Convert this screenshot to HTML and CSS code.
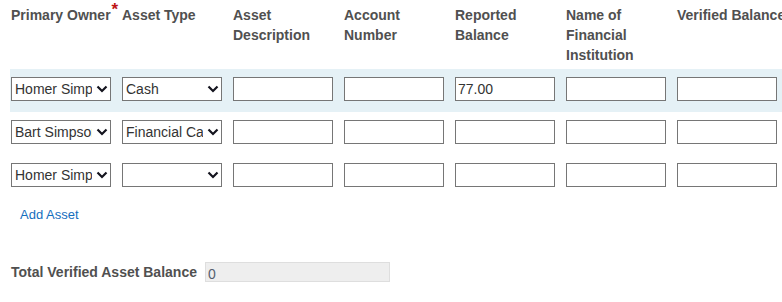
FILE: index.html
```html
<!DOCTYPE html>
<html lang="en">
<head>
  <meta charset="UTF-8">
  <meta name="viewport" content="width=device-width, initial-scale=1.0">
  <link rel="stylesheet" href="styles.css">
  <title>Assets</title>
</head>
<body>
  <div class="assets">
    <div class="asset-row asset-head">
      <div class="head-cell nowrap">Primary Owner<span class="required">*</span></div>
      <div class="head-cell">Asset Type</div>
      <div class="head-cell">Asset Description</div>
      <div class="head-cell">Account Number</div>
      <div class="head-cell">Reported Balance</div>
      <div class="head-cell">Name of Financial Institution</div>
      <div class="head-cell nowrap">Verified Balance</div>
    </div>

    <div class="asset-row is-active">
      <div class="select-wrap">
        <select class="field-select"><option>Homer Simpson</option><option>Bart Simpson</option></select>
        <svg class="chevron" viewBox="0 0 12 8"><polyline points="1.5,1.5 6,6 10.5,1.5" /></svg>
      </div>
      <div class="select-wrap">
        <select class="field-select"><option>Cash</option><option>Financial Card</option></select>
        <svg class="chevron" viewBox="0 0 12 8"><polyline points="1.5,1.5 6,6 10.5,1.5" /></svg>
      </div>
      <input class="field-input" type="text">
      <input class="field-input" type="text">
      <input class="field-input" type="text" value="77.00">
      <input class="field-input" type="text">
      <input class="field-input" type="text">
    </div>

    <div class="asset-row">
      <div class="select-wrap">
        <select class="field-select"><option>Bart Simpson</option><option>Homer Simpson</option></select>
        <svg class="chevron" viewBox="0 0 12 8"><polyline points="1.5,1.5 6,6 10.5,1.5" /></svg>
      </div>
      <div class="select-wrap">
        <select class="field-select"><option>Financial Card</option><option>Cash</option></select>
        <svg class="chevron" viewBox="0 0 12 8"><polyline points="1.5,1.5 6,6 10.5,1.5" /></svg>
      </div>
      <input class="field-input" type="text">
      <input class="field-input" type="text">
      <input class="field-input" type="text">
      <input class="field-input" type="text">
      <input class="field-input" type="text">
    </div>

    <div class="asset-row">
      <div class="select-wrap">
        <select class="field-select"><option>Homer Simpson</option><option>Bart Simpson</option></select>
        <svg class="chevron" viewBox="0 0 12 8"><polyline points="1.5,1.5 6,6 10.5,1.5" /></svg>
      </div>
      <div class="select-wrap">
        <select class="field-select"><option></option><option>Cash</option></select>
        <svg class="chevron" viewBox="0 0 12 8"><polyline points="1.5,1.5 6,6 10.5,1.5" /></svg>
      </div>
      <input class="field-input" type="text">
      <input class="field-input" type="text">
      <input class="field-input" type="text">
      <input class="field-input" type="text">
      <input class="field-input" type="text">
    </div>

    <a class="add-link" href="#">Add Asset</a>

    <div class="total">
      <label class="total-label">Total Verified Asset Balance</label>
      <input class="total-input" type="text" value="0" readonly>
    </div>
  </div>
</body>
</html>
```

FILE: styles.css
```css
:root {
  --text-color: rgb(80, 80, 80);
  --band-color: rgb(229, 241, 246);
  --field-border: rgb(118, 118, 118);
  --link-color: rgb(20, 110, 190);
}

body {
  background-color: white;
  color: var(--text-color);
  font-family: "Liberation Sans", Arial, sans-serif;
  margin: 0px;
  overflow: hidden;
  padding: 0px;
}

.assets {
  padding-left: 10px;
}

.asset-row {
  display: grid;
  grid-template-columns: repeat(7, 100px);
  column-gap: 11px;
  padding: 8px 10px 11px 1px;
  width: max-content;
}

.asset-row.is-active {
  background-color: var(--band-color);
}

.asset-head {
  align-items: start;
  padding-top: 5px;
  padding-bottom: 4px;
}

.head-cell {
  font-size: 14px;
  font-weight: bold;
  line-height: 20px;
}

.head-cell.nowrap {
  white-space: nowrap;
}

.required {
  color: rgb(190, 20, 20);
  font-size: 17px;
  position: relative;
  top: -5px;
  margin-left: 1px;
}

.select-wrap {
  position: relative;
  height: 24px;
}

.field-select,
.field-input {
  background-color: white;
  border: 1px solid var(--field-border);
  border-radius: 0px;
  box-sizing: border-box;
  color: rgb(51, 51, 51);
  font-family: "Liberation Sans", Arial, sans-serif;
  font-size: 14px;
  height: 24px;
  margin: 0px;
  width: 100px;
}

.field-select {
  appearance: none;
  -webkit-appearance: none;
  padding: 0px 18px 0px 3px;
}

.field-input {
  padding: 0px 2px;
}

.chevron {
  fill: none;
  height: 8px;
  pointer-events: none;
  position: absolute;
  right: 3px;
  stroke: rgb(20, 20, 30);
  stroke-width: 2.2;
  top: 8px;
  width: 12px;
}

.add-link {
  color: var(--link-color);
  display: inline-block;
  font-size: 13px;
  line-height: 16px;
  margin: 9px 0px 0px 10px;
  text-decoration: none;
}

.total {
  align-items: center;
  display: flex;
  gap: 8px;
  margin-top: 39px;
  padding-left: 1px;
}

.total-label {
  font-size: 14px;
  font-weight: bold;
}

.total-input {
  background-color: rgb(238, 238, 238);
  border: 1px solid rgb(222, 222, 222);
  box-sizing: border-box;
  color: rgb(85, 95, 110);
  font-family: "Liberation Sans", Arial, sans-serif;
  font-size: 14px;
  height: 20px;
  margin: 0px;
  padding: 3px 2px 0px;
  width: 185px;
}
```
